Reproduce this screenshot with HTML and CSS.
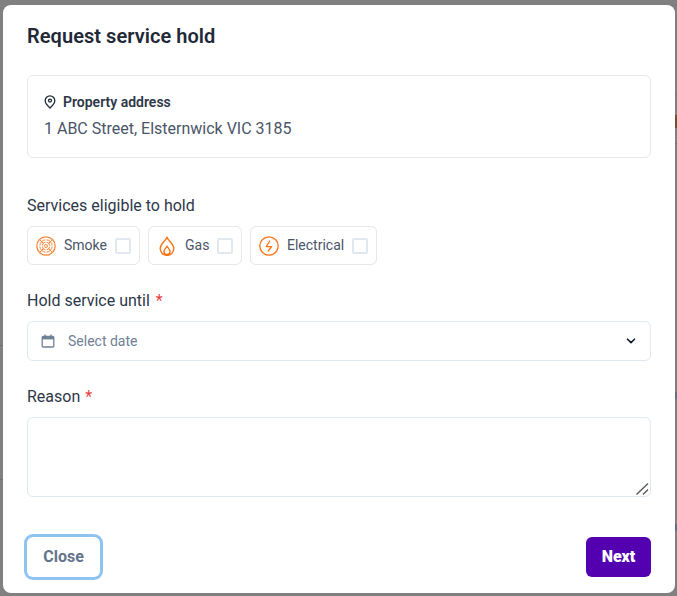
FILE: index.html
```html
<!DOCTYPE html>
<html lang="en">
<head>
<meta charset="utf-8">
<title>Request service hold</title>
<link rel="stylesheet" href="styles.css">
</head>
<body>
<div class="backdrop" aria-hidden="true">
  <span class="mark line-r1"></span>
  <span class="mark line-r2"></span>
  <span class="mark dot-orange"></span>
  <span class="mark dot-blue1"></span>
  <span class="mark dot-blue2"></span>
  <span class="mark line-l1"></span>
  <span class="mark line-l2"></span>
</div>
<div class="modal">
  <h1 class="title">Request service hold</h1>
  <section class="card">
    <div class="card-head">
      <svg class="pin" viewBox="0 0 12 14" fill="none" stroke="#1f2937" stroke-width="1.3"><path d="M6 13C3.2 10.4 1.2 8.2 1.2 5.7a4.8 4.8 0 0 1 9.6 0C10.8 8.2 8.8 10.4 6 13Z" stroke-linejoin="round"/><circle cx="6" cy="5.6" r="1.5"/></svg>
      <span>Property address</span>
    </div>
    <div class="address">1 ABC Street, Elsternwick VIC 3185</div>
  </section>
  <div class="label services-label">Services eligible to hold</div>
  <div class="chips">
    <label class="chip chip-smoke">
      <svg class="ico" viewBox="0 0 20 20" fill="none" stroke="#fb8a3c" stroke-width="1"><circle cx="10" cy="10" r="9.2" stroke-width="1.3"/><circle cx="10" cy="10" r="6.2"/><circle cx="10" cy="10" r="3.8"/><circle cx="10" cy="10" r="1.5"/><g stroke="#fff" stroke-width="1.2"><path d="M10 2v6M10 12v6M2 10h6M12 10h6"/></g><path d="M3.6 3.6l4 4M16.4 3.6l-4 4M3.6 16.4l4-4M16.4 16.4l-4-4"/></svg>
      <span>Smoke</span><span class="box"></span>
    </label>
    <label class="chip chip-gas">
      <svg class="ico" viewBox="0 0 20 20" fill="none" stroke="#f97316" stroke-width="1.4" stroke-linejoin="round"><path d="M10 1.2C10.6 4.4 16.8 7.6 16.8 12.6A6.8 6.8 0 0 1 3.2 12.6C3.2 7.6 9.4 4.4 10 1.2Z"/><path d="M10 10.2C10.6 12 13 13 13 15.5A3 3 0 0 1 7 15.5C7 13 9.4 12 10 10.2Z"/></svg>
      <span>Gas</span><span class="box"></span>
    </label>
    <label class="chip chip-elec">
      <svg class="ico" viewBox="0 0 20 20" fill="none" stroke="#f97316" stroke-width="1.3" stroke-linejoin="round" stroke-linecap="round"><circle cx="10" cy="10" r="9.2"/><path d="M10.8 5 7.2 10.6h5.4L9.2 15"/></svg>
      <span>Electrical</span><span class="box"></span>
    </label>
  </div>
  <div class="label until-label">Hold service until <span class="req">*</span></div>
  <div class="select">
    <svg class="cal" viewBox="0 0 14 14" fill="none" stroke="#718096" stroke-width="1.3"><rect x="1.2" y="2.4" width="11.6" height="10.6" rx="1"/><path d="M1.2 4.1h11.6" stroke-width="2.6"/><path d="M4 .6v2.4M10 .6v2.4"/></svg>
    <span class="placeholder">Select date</span>
    <svg class="chev" viewBox="0 0 10 6" fill="none" stroke="#111827" stroke-width="1.6" stroke-linecap="round" stroke-linejoin="round"><path d="M1.5 1.2 5 4.6l3.5-3.4"/></svg>
  </div>
  <div class="label reason-label">Reason <span class="req">*</span></div>
  <div class="reason-wrap">
    <textarea class="reason"></textarea>
    <svg class="grip" viewBox="0 0 13 12" fill="none" stroke="#555" stroke-width="1.3"><path d="M.5 11.5 12 .5M7 11.5 12 6.5"/></svg>
  </div>
  <div class="actions">
    <button class="btn btn-close" type="button">Close</button>
    <button class="btn btn-next" type="button">Next</button>
  </div>
</div>
</body>
</html>
```
FILE: styles.css
```css
* { box-sizing: border-box; }
html, body { margin: 0; height: 100%; }
body {
  position: relative;
  width: 677px;
  height: 596px;
  overflow: hidden;
  background: #808080;
  padding: 5px 2px 3px 3px;
  font-family: Roboto, "Liberation Sans", sans-serif;
  color: #1f2937;
}
.backdrop { position: absolute; inset: 0; }
.mark { position: absolute; display: block; background: #707070; }
.line-r1 { left: 675px; top: 94px; width: 2px; height: 1px; }
.line-r2 { left: 675px; top: 143px; width: 2px; height: 1px; }
.dot-orange { left: 675px; top: 115px; width: 2px; height: 13px; background: #6b5130; }
.dot-blue1 { left: 675px; top: 392px; width: 2px; height: 7px; background: #5f6f88; }
.dot-blue2 { left: 675px; top: 524px; width: 2px; height: 7px; background: #5f6f88; }
.line-l1 { left: 0; top: 345px; width: 3px; height: 1px; }
.line-l2 { left: 0; top: 479px; width: 3px; height: 1px; }
.modal {
  position: relative;
  width: 672px;
  height: 588px;
  background: #fff;
  border-radius: 8px;
  padding: 20px 24px 16px;
  display: flex;
  flex-direction: column;
}
.title {
  margin: 0;
  font-size: 20px;
  line-height: 22px;
  font-weight: 600;
  letter-spacing: 0.05px;
  color: #1f2937;
}
.card {
  margin-top: 28px;
  height: 83px;
  border: 1px solid #e5e7eb;
  border-radius: 6px;
  padding: 17px 16px 0;
}
.card-head {
  display: flex;
  align-items: center;
  gap: 7px;
  font-size: 14px;
  line-height: 18px;
  font-weight: 600;
  color: #2d3748;
}
.pin { width: 12px; height: 14px; }
.address {
  margin-top: 8px;
  font-size: 16px;
  line-height: 20px;
  color: #4a5568;
}
.label {
  font-size: 16px;
  line-height: 20px;
  color: #2d3748;
}
.services-label { margin-top: 38px; }
.chips {
  margin-top: 10px;
  display: flex;
  gap: 8px;
}
.chip {
  height: 39px;
  border: 1px solid #e5e7eb;
  border-radius: 6px;
  display: flex;
  align-items: center;
  font-size: 14px;
  line-height: 18px;
  color: #4a5568;
  padding: 0 8px;
}
.chip > span:not(.box) { position: relative; top: -1px; }
.chip-smoke { width: 113px; }
.chip-gas { width: 94px; }
.chip-elec { width: 127px; }
.ico { width: 20px; height: 20px; flex: none; margin-right: 8px; }
.box {
  width: 16px;
  height: 16px;
  border: 2px solid #e2e8f0;
  border-radius: 2px;
  background: #fff;
  margin-left: auto;
}
.until-label { margin-top: 26px; }
.select {
  margin-top: 10px;
  height: 40px;
  border: 1px solid #e2e8f0;
  border-radius: 6px;
  display: flex;
  align-items: center;
  padding: 0 14px 0 13px;
}
.cal { width: 14px; height: 14px; flex: none; }
.placeholder {
  margin-left: 13px;
  font-size: 14px;
  color: #718096;
}
.chev { width: 10px; height: 6px; margin-left: auto; }
.reason-label { margin-top: 26px; }
.req { color: #e53e3e; margin-left: 1px; }
.until-label .req { margin-left: 2px; }
.reason-wrap {
  position: relative;
  margin-top: 10px;
  height: 80px;
}
.reason {
  display: block;
  width: 100%;
  height: 100%;
  border: 1px solid #e2e8f0;
  border-radius: 6px;
  background: #fff;
  outline: none;
  padding: 8px 12px;
  resize: none;
}
.grip {
  position: absolute;
  right: 2px;
  bottom: 2px;
  width: 13px;
  height: 12px;
  pointer-events: none;
}
.actions {
  margin-top: 40px;
  display: flex;
  justify-content: space-between;
}
.btn {
  height: 40px;
  border-radius: 6px;
  font-family: inherit;
  font-size: 16px;
  font-weight: 700;
  border: 0;
  padding: 0 0 2px;
}
.btn-close {
  width: 73px;
  background: #fff;
  color: #64748b;
  box-shadow: 0 0 0 3px #90c4f0;
}
.btn-next {
  width: 65px;
  background: #5300b0;
  color: #fff;
  font-weight: 900;
}
```
